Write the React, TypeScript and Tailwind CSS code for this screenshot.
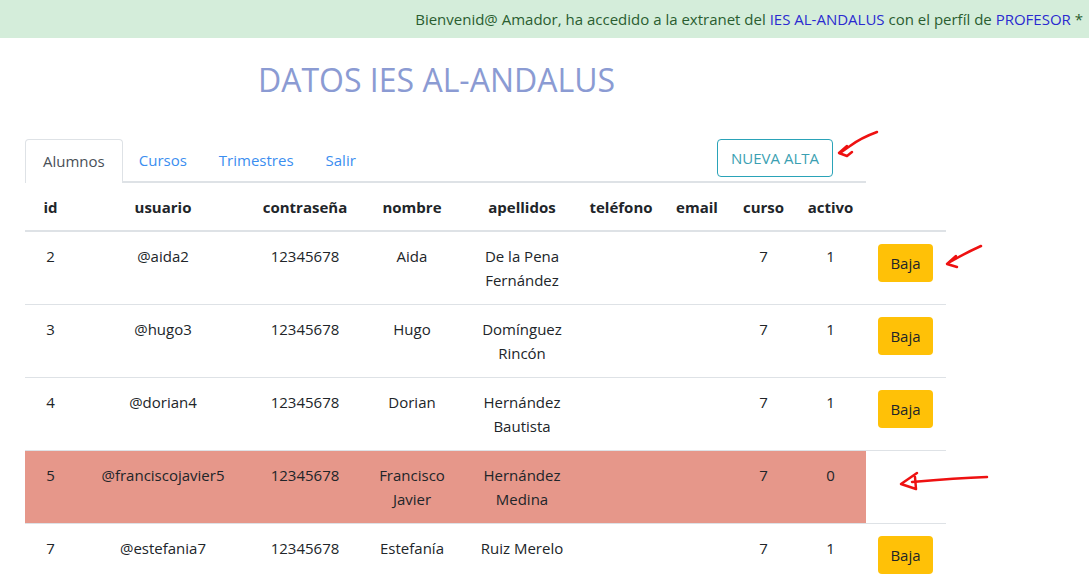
import React from "react";

type Row = {
  id: string;
  usuario: string;
  pass: string;
  nombre: string[];
  apellidos: string[];
  curso: string;
  activo: string;
  baja: boolean;
};

const rows: Row[] = [
  { id: "2", usuario: "@aida2", pass: "12345678", nombre: ["Aida"], apellidos: ["De la Pena", "Fernández"], curso: "7", activo: "1", baja: true },
  { id: "3", usuario: "@hugo3", pass: "12345678", nombre: ["Hugo"], apellidos: ["Domínguez", "Rincón"], curso: "7", activo: "1", baja: true },
  { id: "4", usuario: "@dorian4", pass: "12345678", nombre: ["Dorian"], apellidos: ["Hernández", "Bautista"], curso: "7", activo: "1", baja: true },
  { id: "5", usuario: "@franciscojavier5", pass: "12345678", nombre: ["Francisco", "Javier"], apellidos: ["Hernández", "Medina"], curso: "7", activo: "0", baja: false },
  { id: "7", usuario: "@estefania7", pass: "12345678", nombre: ["Estefanía"], apellidos: ["Ruiz Merelo"], curso: "7", activo: "1", baja: true },
];

const headers = ["id", "usuario", "contraseña", "nombre", "apellidos", "teléfono", "email", "curso", "activo"];
const widths = ["w-[51px]", "w-[174px]", "w-[110px]", "w-[104px]", "w-[116px]", "w-[82px]", "w-[70px]", "w-[63px]", "w-[71px]", "w-[80px]"];

export default function App() {
  return (
    <div
      className="relative w-[1089px] h-[584px] overflow-hidden bg-white text-[15px] leading-6 text-[#212529]"
      style={{ fontFamily: '"Open Sans", "Noto Sans", sans-serif' }}
    >
      <div className="h-[38px] bg-[#d4edda] flex items-center justify-end pr-[6px] text-[#2a5d30]">
        <span>
          Bienvenid@ Amador, ha accedido a la extranet del{" "}
          <span className="text-[#2a2ad0]">IES AL-ANDALUS</span> con el perfíl de{" "}
          <span className="text-[#2a2ad0]">PROFESOR</span> *
        </span>
      </div>

      <h1 className="pl-[258px] pt-[18px] h-[101px] text-[32px] leading-[48px] text-[#8b9bd3]">DATOS IES AL-ANDALUS</h1>

      <div className="ml-[25px] w-[841px] flex items-end border-b-2 border-[#dee2e6]">
        <div className="px-[17px] flex items-center border border-b-0 border-[#dee2e6] rounded-t-[4px] bg-white text-[#495057] -mb-[2px] h-[44px] pb-[2px]">
          Alumnos
        </div>
        <div className="h-[42px] px-4 flex items-center text-[#3b8ef0]">Cursos</div>
        <div className="h-[42px] px-4 flex items-center text-[#3b8ef0]">Trimestres</div>
        <div className="h-[42px] px-4 flex items-center text-[#3b8ef0]">Salir</div>
        <div className="ml-auto mr-[33px] mb-[4px] h-[38px] px-[13px] flex items-center border border-[#2aa3b8] rounded-[4px] text-[#3b9fb2]">
          NUEVA ALTA
        </div>
      </div>

      <table className="ml-[25px] w-[921px] table-fixed border-collapse text-center">
        <thead>
          <tr>
            {headers.map((h, i) => (
              <th key={h} className={`${widths[i]} h-[48px] px-0 font-bold align-middle border-b-2 border-[#dee2e6]`}>
                {h}
              </th>
            ))}
            <th className={`${widths[9]} border-b-2 border-[#dee2e6]`}></th>
          </tr>
        </thead>
        <tbody>
          {rows.map((r) => {
            const bg = r.baja ? "" : "bg-[#e6978a]";
            const cell = `align-top pt-3 pb-3 border-b border-[#dee2e6] ${bg}`;
            return (
              <tr key={r.id}>
                <td className={cell}>{r.id}</td>
                <td className={cell}>{r.usuario}</td>
                <td className={cell}>{r.pass}</td>
                <td className={cell}>
                  {r.nombre.map((n) => (
                    <div key={n}>{n}</div>
                  ))}
                </td>
                <td className={cell}>
                  {r.apellidos.map((n) => (
                    <div key={n}>{n}</div>
                  ))}
                </td>
                <td className={cell}></td>
                <td className={cell}></td>
                <td className={cell}>{r.curso}</td>
                <td className={cell}>{r.activo}</td>
                <td className="align-top pt-[12px] pb-3 border-b border-[#dee2e6]">
                  {r.baja ? (
                    <div className="ml-[12px] w-[55px] h-[38px] flex items-center justify-center rounded-[4px] bg-[#ffc107] text-[#212529]">
                      Baja
                    </div>
                  ) : (
                    <div className="h-[48px]"></div>
                  )}
                </td>
              </tr>
            );
          })}
        </tbody>
      </table>

      {/* red hand-drawn arrows */}
      <svg className="absolute left-0 top-0 pointer-events-none" width="1089" height="584">
        <g fill="none" stroke="#ee1111" strokeWidth="2.5" strokeLinecap="round" strokeLinejoin="round">
          <path d="M877 132 C866 136 858 140 850 146 L840 153" />
          <path d="M847 146 L839 153 L847 156 L852 152" />
          <path d="M981 246 C972 250 962 255 950 262" />
          <path d="M956 256 L947 264 L957 267" />
          <path d="M987 477 C960 478 935 480 912 482" />
          <path d="M917 473 L901 484 L916 489 L915 477" />
        </g>
      </svg>
    </div>
  );
}
